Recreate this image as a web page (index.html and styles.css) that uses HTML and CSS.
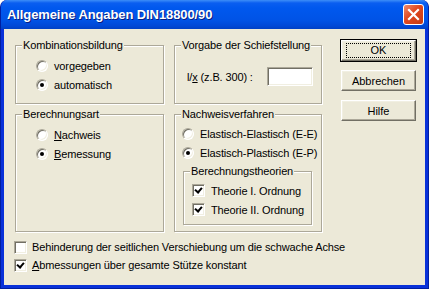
FILE: index.html
```html
<!doctype html>
<html>
<head>
    <meta charset="utf-8">
    <title>Allgemeine Angaben DIN18800/90</title>
    <link rel="stylesheet" href="styles.css">
</head>
<body>

<div class="window">
    <div class="titlebar">
        <span class="caption">Allgemeine Angaben DIN18800/90</span>
        <span class="close">
            <svg width="13" height="13" viewBox="0 0 13 13"><path d="M2 2 L11 11 M11 2 L2 11" stroke="#fff" stroke-width="2.2" stroke-linecap="square"/></svg>
        </span>
    </div>

    <div class="client">
        <div class="top">
            <div class="groups">
                <div class="group kombi">
                    <span class="legend">Kombinationsbildung</span>
                    <div class="option"><span class="radio"></span>vorgegeben</div>
                    <div class="option"><span class="radio on"></span>automatisch</div>
                </div>
                <div class="group vorgabe">
                    <span class="legend">Vorgabe der Schiefstellung</span>
                    <div class="field-row">
                        <span>l/<u>x</u> (z.B. 300) :</span>
                        <span class="edit"></span>
                    </div>
                </div>
                <div class="group art">
                    <span class="legend">Berechnungsart</span>
                    <div class="option"><span class="radio"></span><span><u>N</u>achweis</span></div>
                    <div class="option"><span class="radio on"></span><span><u>B</u>emessung</span></div>
                </div>
                <div class="group verfahren">
                    <span class="legend">Nachweisverfahren</span>
                    <div class="option"><span class="radio"></span>Elastisch-Elastisch (E-E)</div>
                    <div class="option"><span class="radio on"></span>Elastisch-Plastisch (E-P)</div>
                    <div class="group theorien">
                        <span class="legend">Berechnungstheorien</span>
                        <div class="option"><span class="check on"></span>Theorie I. Ordnung</div>
                        <div class="option"><span class="check on"></span>Theorie II. Ordnung</div>
                    </div>
                </div>
            </div>
            <div class="buttons">
                <button class="default"><span class="focus">OK</span></button>
                <button>Abbrechen</button>
                <button>Hilfe</button>
            </div>
        </div>
        <div class="bottom">
            <div class="option"><span class="check"></span>Behinderung der seitlichen Verschiebung um die schwache Achse</div>
            <div class="option"><span class="check on"></span><span><u>A</u>bmessungen über gesamte Stütze konstant</span></div>
        </div>
    </div>
</div>

</body>
</html>
```

FILE: styles.css
```css
html, body { margin: 0; padding: 0; }
body {
    font-family: "Liberation Sans", Arial, sans-serif;
    font-size: 11px;
    letter-spacing: -0.13px;
    color: #000;
    background: #fff;
}

.window {
    width: 429px; height: 289px;
    box-sizing: border-box;
    display: flex; flex-direction: column;
    background: #0831d9;
    border: 1px solid #001ea0;
    border-top: none;
    border-radius: 7px 7px 0 0;
    overflow: hidden;
}

.titlebar {
    height: 29px; flex: none;
    display: flex; align-items: center; justify-content: space-between;
    padding: 0 4px 0 6px;
    background: linear-gradient(#3d8ef8 0, #0a5ef0 3px, #0058ee 8px, #0053e6 20px, #0048d6 26px, #0040c4 29px);
}
.caption {
    color: #fff;
    font: bold 13px "Liberation Sans", Arial, sans-serif;
    letter-spacing: -0.1px;
    text-shadow: 1px 1px #0a1e80;
}
.close {
    width: 19px; height: 19px;
    display: flex; align-items: center; justify-content: center;
    border: 1px solid #fff;
    border-radius: 3px;
    background: linear-gradient(135deg, #f08c6c, #e0471f 45%, #c43a12);
}

.client {
    flex: 1;
    margin: 0 3px 3px 3px;
    background: #ece9d8;
    padding: 16px 0 0 11px;
}

.top { display: flex; }
.groups {
    display: grid;
    grid-template-columns: 149px 148px;
    grid-template-rows: 59px 118px;
    column-gap: 10px; row-gap: 10px;
}

.group {
    position: relative;
    box-sizing: border-box;
    border: 1px solid #aca899;
    box-shadow: inset 1px 1px #fff, 1px 1px #fff;
}
.legend {
    position: absolute;
    top: -8px; left: 6px;
    padding: 0 1px;
    background: #ece9d8;
    line-height: 14px;
}

.option {
    display: flex; align-items: center;
    height: 19px;
}
.kombi, .art { padding: 10px 0 0 20px; }
.verfahren { padding: 9px 0 0 7px; }
.theorien {
    margin: 9px 9px 0 1px;
    height: 54px;
    padding: 9px 0 0 8px;
}

.radio {
    width: 12px; height: 12px;
    box-sizing: border-box;
    margin-right: 6px;
    border-radius: 50%;
    background: #fff;
    border: 1px solid;
    border-color: #aca899 #fff #fff #aca899;
    box-shadow: inset 1px 1px #716f64, inset -1px -1px #f1efe2;
    position: relative;
}
.radio.on::after {
    content: "";
    position: absolute;
    left: 3px; top: 3px;
    width: 4px; height: 4px;
    border-radius: 50%;
    background: #000;
}

.check {
    width: 13px; height: 13px;
    box-sizing: border-box;
    margin-right: 6px;
    background: #fff;
    border: 1px solid;
    border-color: #aca899 #fff #fff #aca899;
    box-shadow: inset 1px 1px #716f64, inset -1px -1px #f1efe2;
    position: relative;
}
.check.on::after {
    content: "";
    position: absolute;
    left: 3px; top: 1px;
    width: 3px; height: 5px;
    border: solid #000;
    border-width: 0 2px 2px 0;
    transform: rotate(40deg);
}

.vorgabe { padding: 21px 0 0 12px; }
.field-row {
    display: flex; align-items: center; gap: 14px;
}
.edit {
    width: 46px; height: 19px;
    box-sizing: border-box;
    background: #fff;
    border: 1px solid;
    border-color: #aca899 #fff #fff #aca899;
    box-shadow: inset 1px 1px #716f64, inset -1px -1px #f1efe2;
}

.buttons {
    display: flex; flex-direction: column;
    gap: 9px;
    margin: -5px 0 0 19px;
}
button {
    width: 75px; height: 21px;
    padding: 0;
    font: inherit;
    background: #ece9d8;
    border: 1px solid;
    border-color: #fff #716f64 #716f64 #fff;
    box-shadow: inset -1px -1px #aca899, inset 1px 1px #f1efe2;
}
button.default {
    outline: 1px solid #000;
    display: flex; align-items: center; justify-content: center;
}
.focus {
    display: block;
    width: 63px; height: 13px; line-height: 13px;
    border: 1px dotted #000;
}

.bottom {
    padding: 6px 0 0 0;
    margin-left: -1px;
}
.bottom .option { height: 18px; }
.bottom .check { margin-right: 5px; }
```
